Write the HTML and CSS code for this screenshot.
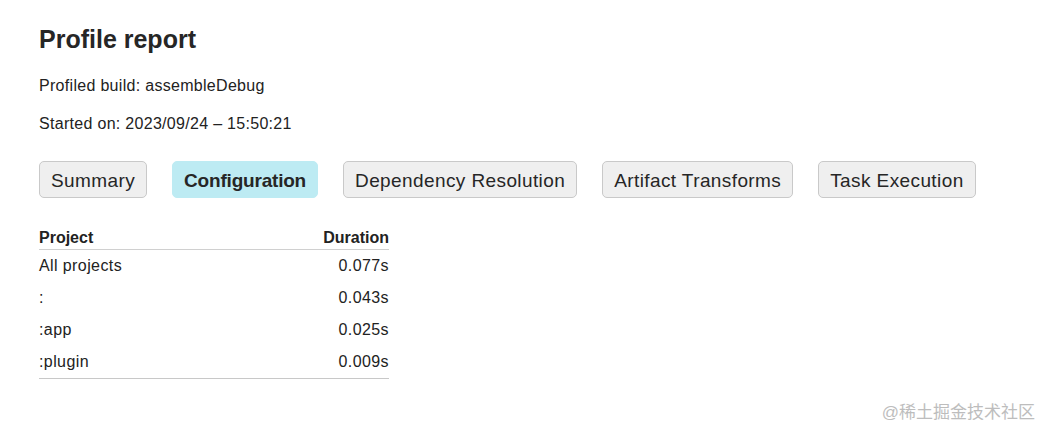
FILE: index.html
```html
<!DOCTYPE html>
<html lang="en">
<head>
  <meta charset="UTF-8">
  <title>Profile report</title>
  <link rel="stylesheet" href="styles.css">
</head>
<body>
  <h1>Profile report</h1>
  <p>Profiled build: assembleDebug</p>
  <p>Started on: 2023/09/24 &ndash; 15:50:21</p>

  <div class="tabs">
    <button class="tab">Summary</button>
    <button class="tab active">Configuration</button>
    <button class="tab">Dependency Resolution</button>
    <button class="tab">Artifact Transforms</button>
    <button class="tab">Task Execution</button>
  </div>

  <table class="report">
    <thead>
      <tr><th>Project</th><th class="num">Duration</th></tr>
    </thead>
    <tbody>
      <tr><td>All projects</td><td class="num">0.077s</td></tr>
      <tr><td>:</td><td class="num">0.043s</td></tr>
      <tr><td>:app</td><td class="num">0.025s</td></tr>
      <tr><td>:plugin</td><td class="num">0.009s</td></tr>
    </tbody>
  </table>

  <div class="watermark">@稀土掘金技术社区</div>
</body>
</html>
```

FILE: styles.css
```css
body {
  margin: 0;
  padding: 25px 39px;
  font-family: "Liberation Sans", Arial, sans-serif;
  color: #222;
  background: #fff;
}

h1 {
  margin: 0 0 23px;
  font-size: 25px;
  line-height: 29px;
  font-weight: bold;
  color: #262626;
}

p {
  margin: 0 0 20px;
  font-size: 16px;
  line-height: 18px;
  letter-spacing: 0.3px;
}

/* Pestañas */
.tabs {
  display: flex;
  gap: 25px;
  margin-top: 28px;
}

.tab {
  font-family: inherit;
  font-size: 19px;
  line-height: 23px;
  letter-spacing: 0.4px;
  color: #262626;
  padding: 7px 11px 5px;
  background-color: #efefef;
  border: 1px solid #c9c9c9;
  border-radius: 5px;
}

.tab.active {
  background-color: #bdebf3;
  border-color: #bdebf3;
  font-weight: bold;
  letter-spacing: -0.2px;
}

/* Tabla */
.report {
  width: 350px;
  margin-top: 31px;
  border-collapse: collapse;
  font-size: 16px;
}

.report th {
  text-align: left;
  font-weight: bold;
  line-height: 18px;
  padding: 0 0 2px;
  border-bottom: 1px solid #d0d0d0;
}

.report td {
  height: 32px;
  padding: 0;
  line-height: 18px;
  letter-spacing: 0.4px;
  vertical-align: middle;
}

.report tbody tr:last-child td {
  border-bottom: 1px solid #c8c8c8;
}

.report .num {
  text-align: right;
}

.watermark {
  position: absolute;
  right: 8px;
  bottom: 9px;
  font-size: 17px;
  color: #bdbdbd;
  font-family: "Liberation Sans", "Noto Sans CJK SC", sans-serif;
}
```
